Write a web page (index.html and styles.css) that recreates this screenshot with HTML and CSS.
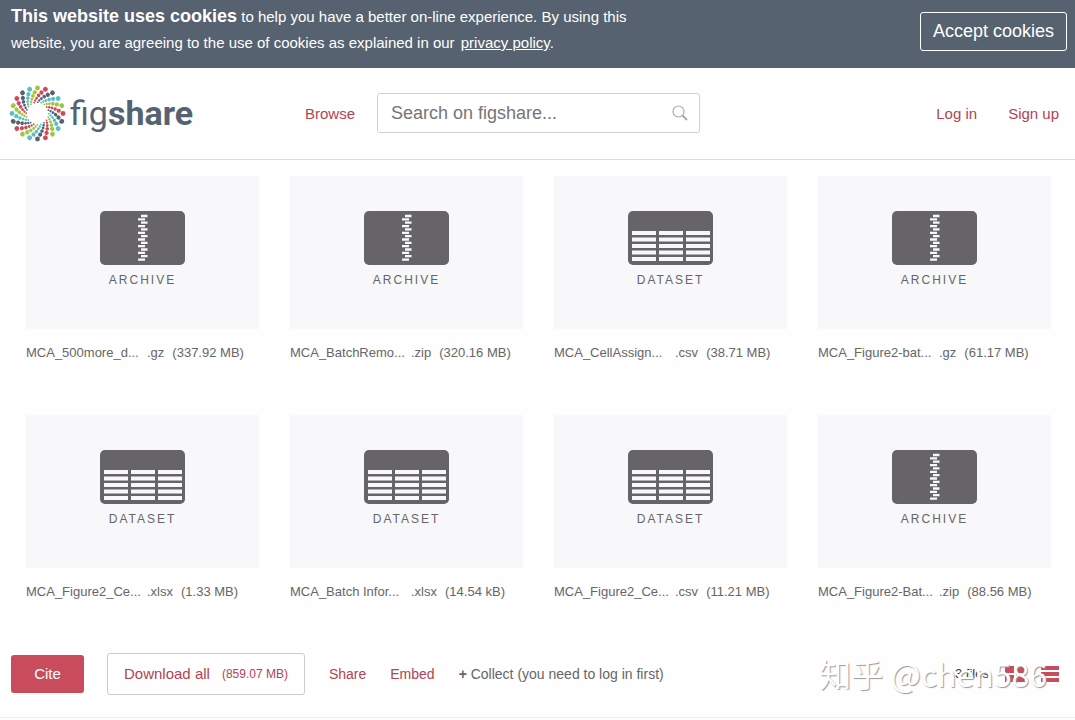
FILE: index.html
```
<!DOCTYPE html>
<html lang="en">
<head>
<meta charset="utf-8">
<title>figshare</title>
<meta name="viewport" content="width=device-width, initial-scale=1">
<link rel="stylesheet" href="styles.css">
</head>
<body>
<svg class="defs" aria-hidden="true">
  <defs>
    <g id="arm">
      <circle cx="0" cy="-25.500" r="2.400"/><circle cx="-2.7" cy="-21.2" r="2.1"/><circle cx="-4.5" cy="-17.6" r="1.8"/><circle cx="-5.6" cy="-14.4" r="1.4"/><circle cx="-6.2" cy="-11.7" r="1.2"/><circle cx="-6.5" cy="-9.3" r="0.9"/>
    </g>
    <g id="arms">
      <use href="#arm"/><use href="#arm" transform="rotate(72)"/><use href="#arm" transform="rotate(144)"/><use href="#arm" transform="rotate(216)"/><use href="#arm" transform="rotate(288)"/>
    </g>
    <symbol id="archive" viewBox="0 0 85 54">
      <rect width="85" height="54" rx="5" fill="#666467"/>
      <path fill="none" stroke="#f8f7f9" stroke-width="2.300" d="M41 5h6.500M41 11.700h6.500M41 18.400h6.500M41 25.100h6.500M41 31.800h6.500M41 38.500h6.500M41 45.200h6.500M38 8.400h7M38 15.100h7M38 21.800h7M38 28.500h7M38 35.200h7M38 41.900h7M38 48.600h7"/>
    </symbol>
    <symbol id="dataset" viewBox="0 0 85 54">
      <rect width="85" height="54" rx="5" fill="#666467"/>
      <path fill="none" stroke="#f8f7f9" stroke-width="4" d="M4 22h24M31 22h24M58 22h24M4 28.500h24M31 28.500h24M58 28.500h24M4 35h24M31 35h24M58 35h24M4 41.500h24M31 41.500h24M58 41.500h24M4 48h24M31 48h24M58 48h24"/>
    </symbol>
  </defs>
</svg>

<section class="cookies" aria-label="Cookies">
  <p class="cookies-text"><strong>This website uses cookies</strong> to help you have a better on-line experience. By using this website, you are agreeing to the use of cookies as explained in our <a href="#privacy">privacy policy</a>.</p>
  <button class="accept" type="button">Accept cookies</button>
</section>

<header class="header">
  <a class="logo" href="#home" aria-label="figshare">
    <svg class="logo-mark" viewBox="-28.500 -28.500 57 57" aria-hidden="true">
      <use href="#arms" fill="#a0c63c"/>
      <use href="#arms" fill="#cf4a5b" transform="rotate(18)"/>
      <use href="#arms" fill="#566270" transform="rotate(36)"/>
      <use href="#arms" fill="#5dbfc5" transform="rotate(54)"/>
    </svg>
    <span class="logo-name">fig<b>share</b></span>
  </a>
  <a class="browse" href="#browse">Browse</a>
  <form class="search" role="search">
    <input class="search-input" type="search" aria-label="Search on figshare" placeholder="Search on figshare...">
    <button class="search-button" type="button" aria-label="Search">
      <svg width="16" height="16" viewBox="0 0 16 16" fill="none" stroke="#aaa" aria-hidden="true"><circle cx="6.500" cy="6.500" r="5.500" stroke-width="1.200"/><path d="M10.500 10.500l4.500 4.500" stroke-width="2"/></svg>
    </button>
  </form>
  <nav class="account">
    <a href="#login">Log in</a>
    <a href="#signup">Sign up</a>
  </nav>
</header>

<main class="files">
  <article class="file">
    <a class="preview" href="#f1"><svg class="type-icon" aria-hidden="true"><use href="#archive"/></svg><span class="type">ARCHIVE</span></a>
    <p class="caption"><span class="name">MCA_500more_d...</span><span class="ext">.gz</span><span>(337.92 MB)</span></p>
  </article>
  <article class="file">
    <a class="preview" href="#f2"><svg class="type-icon" aria-hidden="true"><use href="#archive"/></svg><span class="type">ARCHIVE</span></a>
    <p class="caption"><span class="name">MCA_BatchRemo...</span><span class="ext">.zip</span><span>(320.16 MB)</span></p>
  </article>
  <article class="file">
    <a class="preview" href="#f3"><svg class="type-icon" aria-hidden="true"><use href="#dataset"/></svg><span class="type">DATASET</span></a>
    <p class="caption"><span class="name">MCA_CellAssign...</span><span class="ext">.csv</span><span>(38.71 MB)</span></p>
  </article>
  <article class="file">
    <a class="preview" href="#f4"><svg class="type-icon" aria-hidden="true"><use href="#archive"/></svg><span class="type">ARCHIVE</span></a>
    <p class="caption"><span class="name">MCA_Figure2-bat...</span><span class="ext">.gz</span><span>(61.17 MB)</span></p>
  </article>
  <article class="file">
    <a class="preview" href="#f5"><svg class="type-icon" aria-hidden="true"><use href="#dataset"/></svg><span class="type">DATASET</span></a>
    <p class="caption"><span class="name">MCA_Figure2_Ce...</span><span class="ext">.xlsx</span><span>(1.33 MB)</span></p>
  </article>
  <article class="file">
    <a class="preview" href="#f6"><svg class="type-icon" aria-hidden="true"><use href="#dataset"/></svg><span class="type">DATASET</span></a>
    <p class="caption"><span class="name">MCA_Batch Infor...</span><span class="ext">.xlsx</span><span>(14.54 kB)</span></p>
  </article>
  <article class="file">
    <a class="preview" href="#f7"><svg class="type-icon" aria-hidden="true"><use href="#dataset"/></svg><span class="type">DATASET</span></a>
    <p class="caption"><span class="name">MCA_Figure2_Ce...</span><span class="ext">.csv</span><span>(11.21 MB)</span></p>
  </article>
  <article class="file">
    <a class="preview" href="#f8"><svg class="type-icon" aria-hidden="true"><use href="#archive"/></svg><span class="type">ARCHIVE</span></a>
    <p class="caption"><span class="name">MCA_Figure2-Bat...</span><span class="ext">.zip</span><span>(88.56 MB)</span></p>
  </article>
</main>

<footer class="actions">
  <button class="cite" type="button">Cite</button>
  <a class="download" href="#download">Download all <small>(859.07 MB)</small></a>
  <a class="share" href="#share">Share</a>
  <a class="embed" href="#embed">Embed</a>
  <span class="collect"><b>+</b> Collect (you need to log in first)</span>
  <div class="view">
    <span class="count">3 files</span>
    <button class="view-button" type="button" aria-label="Grid view"><svg width="20" height="16" viewBox="0 0 20 16" fill="#c94c5c" aria-hidden="true"><path d="M0 0h9v7H0zM11 0h9v7h-9zM0 9h9v7H0zM11 9h9v7h-9z"/></svg></button>
    <button class="view-button" type="button" aria-label="List view"><svg width="18" height="16" viewBox="0 0 18 16" fill="#c94c5c" aria-hidden="true"><path d="M0 0h18v4H0zM0 6h18v4H0zM0 12h18v4H0z"/></svg></button>
  </div>
  <span class="watermark">知乎 @chen586</span>
</footer>
</body>
</html>
```
FILE: styles.css
```
* { box-sizing: border-box; }
body {
  margin: 0;
  background: #fefefe;
  color: #666;
  font-family: "Liberation Sans", Arial, sans-serif;
  font-size: 15px;
}
a { color: #b04455; text-decoration: none; }
button { font-family: inherit; cursor: pointer; }
.defs { display: none; }

.cookies {
  display: flex;
  justify-content: space-between;
  align-items: flex-start;
  min-height: 68px;
  padding: 3px 8px 12px 11px;
  background: #566270;
  color: #fff;
}
.cookies-text { max-width: 640px; margin: 0; line-height: 26px; }
.cookies-text strong { font-size: 18px; }
.cookies-text a { color: #fff; text-decoration: underline; margin-left: 2px; }
.accept {
  height: 39px;
  margin-top: 9px;
  padding: 0 12px;
  border: 1px solid #fff;
  border-radius: 3px;
  background: transparent;
  color: #fff;
  font-size: 18px;
}

.header {
  display: flex;
  align-items: center;
  height: 92px;
  padding: 0 16px 1px 9px;
  border-bottom: 1px solid #ddd;
}
.logo { display: flex; align-items: center; width: 296px; color: #566270; }
.logo-mark { width: 57px; height: 57px; margin-right: 4px; }
.logo-name { font-family: Roboto, sans-serif; font-size: 34px; line-height: 40px; }
.browse { width: 72px; }
.search { display: flex; width: 323px; height: 40px; border: 1px solid #d0d0d0; border-radius: 3px; background: #fff; }
.search-input {
  flex: 1;
  min-width: 0;
  padding: 0 13px;
  border: 0;
  background: transparent;
  color: #666;
  font-family: inherit;
  font-size: 18px;
}
.search-input::placeholder { color: #757575; }
.search-button { display: flex; align-items: center; padding: 0 11px; border: 0; background: transparent; }
.account { display: flex; gap: 31px; margin-left: auto; }

.files {
  display: grid;
  grid-template-columns: repeat(4, 1fr);
  gap: 46px 31px;
  padding: 16px 24px 36px 26px;
}
.preview {
  display: flex;
  flex-direction: column;
  align-items: center;
  height: 153px;
  padding-top: 35px;
  background: #f8f7f9;
  color: #666;
}
.type-icon { width: 85px; height: 54px; }
.type { margin-top: 7px; font-size: 12px; line-height: 16px; letter-spacing: 2px; }
.caption { display: flex; margin: 16px 0 0; font-size: 13px; line-height: 16px; white-space: nowrap; }
.name { width: 121px; }
.ext { margin-right: 8px; }
.file { padding-bottom: 8px; }

.actions {
  position: relative;
  display: flex;
  align-items: center;
  height: 74px;
  padding: 0 16px 14px 11px;
  border-bottom: 1px solid #eee;
}
.cite {
  width: 73px;
  height: 38px;
  margin-right: 23px;
  border: 0;
  border-radius: 3px;
  background: #c94c5c;
  color: #fff;
  font-size: 15px;
}
.download {
  display: flex;
  align-items: center;
  gap: 12px;
  height: 42px;
  margin-right: 24px;
  padding: 0 16px;
  border: 1px solid #ccc;
  border-radius: 3px;
}
.download small { font-size: 12px; }
.share, .embed { margin-right: 24px; font-size: 14px; }
.collect { font-size: 14px; }
.view { display: flex; align-items: center; gap: 16px; margin-left: auto; }
.count { font-size: 13px; color: #333; }
.view-button { display: flex; padding: 0; border: 0; background: transparent; }
.watermark {
  position: absolute;
  right: 28px;
  bottom: 20px;
  color: #fff;
  font-family: "Noto Sans CJK SC", sans-serif;
  font-size: 32px;
  line-height: 48px;
  text-shadow: 1px 1px 1px #999;
  pointer-events: none;
}
```
